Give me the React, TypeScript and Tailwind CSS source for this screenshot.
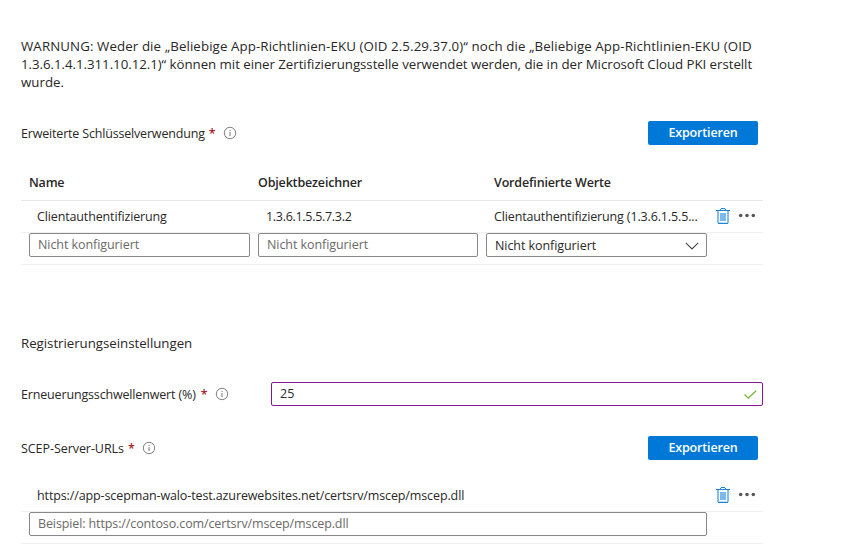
import type { ReactNode } from 'react';

function InfoIcon() {
  return (
    <svg width="12" height="12" viewBox="0 0 12 12" fill="none" stroke="#737373" className="shrink-0 overflow-visible">
      <circle cx="6" cy="6" r="5.7" strokeWidth="0.9" />
      <path d="M6 5v4M6 3v1" strokeWidth="1" />
    </svg>
  );
}

function TrashIcon() {
  return (
    <svg width="14" height="16" viewBox="0 0 14 16" className="shrink-0">
      <path d="M1 3h2v12H1zM11 3h2v12h-2z" fill="#83bdeb" />
      <path d="M4 5h6v8H4z" fill="#7db9ea" />
      <path d="M3 14h8v1H3z" fill="#c5dff5" />
      <path d="M0 2h14v1H0zM2 15h10v1H2zM5 0h4v1H5z" fill="#1a84da" />
      <path d="M4 1h1v1H4zM9 1h1v1H9z" fill="#1a84da" />
    </svg>
  );
}

function MoreIcon() {
  return (
    <svg width="18" height="6" viewBox="0 0 18 6" fill="#555" className="shrink-0">
      <circle cx="2.7" cy="2.6" r="1.75" />
      <circle cx="9" cy="2.6" r="1.75" />
      <circle cx="15.3" cy="2.6" r="1.75" />
    </svg>
  );
}

function RowActions() {
  return (
    <div className="ml-auto flex items-center gap-2 pr-[7px]">
      <TrashIcon />
      <MoreIcon />
    </div>
  );
}

function FieldLabel({ children }: { children: ReactNode }) {
  return (
    <div className="flex items-center whitespace-nowrap">
      <span className="pt-0.5">{children}</span>
      <span className="ml-1 mr-[9px] w-[6px] pt-0.5 font-semibold text-[#a4262c]">*</span>
      <InfoIcon />
    </div>
  );
}

function ExportButton() {
  return (
    <button className="mr-[5px] h-6 w-[110px] rounded-[2px] bg-[#0078d7] pb-px font-semibold tracking-[-0.16px] text-white">
      Exportieren
    </button>
  );
}

const input =
  'h-6 rounded-[2px] border border-[#8a8886] bg-white px-2 pb-px outline-none placeholder:text-[#6b6967] placeholder:opacity-100';

export default function App() {
  return (
    <main className="h-[556px] w-[865px] overflow-hidden bg-white pl-[21px] pt-[37px] font-['Open_Sans','Noto_Sans',sans-serif] text-[12.5px] leading-[18px] text-[#292827]">
      <div className="w-[742px]">
        <p className="h-[54px] whitespace-nowrap text-[13.3px]">
          <span className="tracking-[0.095px]">WARNUNG: Weder die „Beliebige App-Richtlinien-EKU (OID 2.5.29.37.0)“ noch die „Beliebige App-Richtlinien-EKU (OID</span>
          <br />
          <span className="tracking-[-0.05px]">1.3.6.1.4.1.311.10.12.1)“ können mit einer Zertifizierungsstelle verwendet werden, die in der Microsoft Cloud PKI erstellt</span>
          <br />
          <span>wurde.</span>
        </p>

        <section className="mt-[30px]">
          <div className="flex h-6 items-center justify-between">
            <FieldLabel><span className="tracking-[-0.18px]">Erweiterte Schlüsselverwendung</span></FieldLabel>
            <ExportButton />
          </div>
          <div className="mt-[19px] flex h-[37px] items-center border-b border-[#e8e8e8] pl-2 pt-0.5 font-semibold">
            <div className="w-[229px] tracking-[-0.2px]">Name</div>
            <div className="w-[236px] tracking-[-0.17px]">Objektbezeichner</div>
            <div className="tracking-[-0.16px]">Vordefinierte Werte</div>
          </div>
          <div className="flex h-8 items-center border-b border-[#f0f0f0] pl-4">
            <div className="w-[229px] tracking-[-0.14px]">Clientauthentifizierung</div>
            <div className="w-[228px] tracking-[-0.3px]">1.3.6.1.5.5.7.3.2</div>
            <div className="whitespace-nowrap tracking-[-0.14px]">Clientauthentifizierung (1.3.6.1.5.5...</div>
            <div className="ml-auto flex pb-px">
              <RowActions />
            </div>
          </div>
          <div className="flex h-8 gap-2 border-b border-[#f0f0f0] pl-2">
            <input className={`${input} w-[221px] tracking-[-0.07px]`} placeholder="Nicht konfiguriert" />
            <input className={`${input} w-[220px] tracking-[-0.07px]`} placeholder="Nicht konfiguriert" />
            <button className="flex h-6 w-[221px] items-center justify-between rounded-[2px] border border-[#8a8886] pl-2 pr-[7px] pt-px tracking-[-0.07px]">
              Nicht konfiguriert
              <svg width="14" height="8" viewBox="0 0 14 8" fill="none" stroke="#484644">
                <path d="M0.8 0.8 7 7l6.2-6.2" strokeWidth="1.1" />
              </svg>
            </button>
          </div>
        </section>

        <section className="mt-[69px]">
          <h2 className="text-[13.3px] tracking-[-0.04px]">Registrierungseinstellungen</h2>
          <div className="mt-[30px] flex h-6 items-center">
            <div className="w-[250px]">
              <FieldLabel><span className="mr-px tracking-[-0.16px]">Erneuerungsschwellenwert (%)</span></FieldLabel>
            </div>
            <div className="flex h-6 w-[492px] items-center justify-between rounded-[2px] border border-[#881798] pl-2 pr-[5px]">
              <span>25</span>
              <svg width="13" height="9" viewBox="0 0 13 9" fill="none" stroke="#6bb32e">
                <path d="M0.6 4.5 4.3 8.1 12.2 0.7" strokeWidth="1.2" />
              </svg>
            </div>
          </div>
        </section>

        <section className="mt-[30px]">
          <div className="flex h-6 items-center justify-between">
            <FieldLabel><span className="tracking-[-0.06px]">SCEP-Server-URLs</span></FieldLabel>
            <ExportButton />
          </div>
          <div className="mt-[19px] flex h-[33px] items-center border-b border-[#f0f0f0] pl-4">
            <span className="pt-0.5 tracking-[-0.115px]">https://app-scepman-walo-test.azurewebsites.net/certsrv/mscep/mscep.dll</span>
            <RowActions />
          </div>
          <div className="flex h-8 border-b border-[#f0f0f0] pl-2">
            <input className={`${input} w-[678px] tracking-[-0.115px]`} placeholder="Beispiel: https://contoso.com/certsrv/mscep/mscep.dll" />
          </div>
        </section>
      </div>
    </main>
  );
}
